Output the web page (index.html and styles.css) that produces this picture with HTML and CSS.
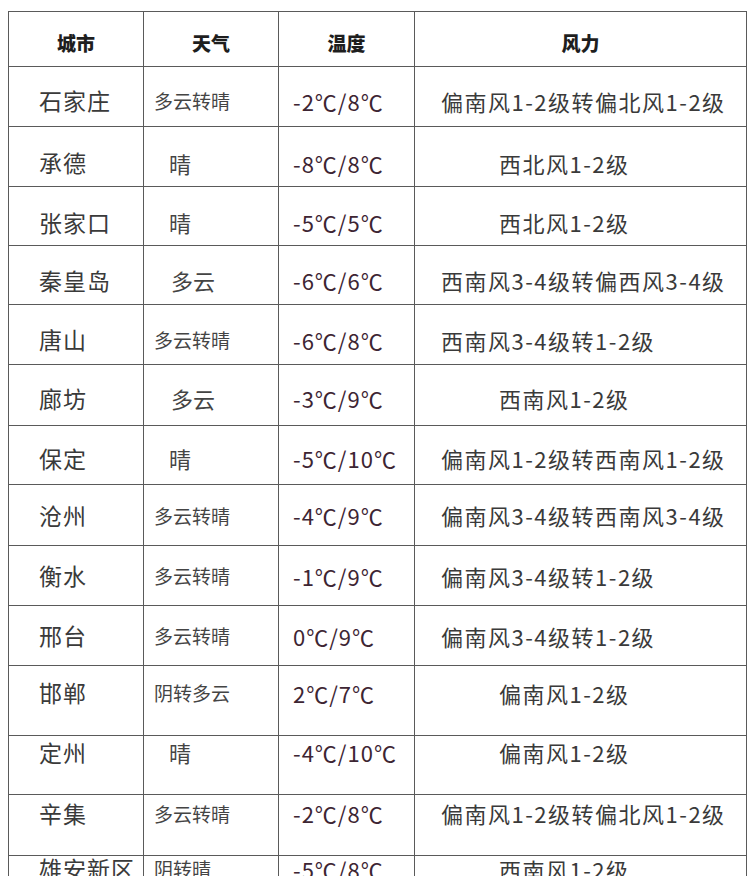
FILE: index.html
```html
<!DOCTYPE html>
<html lang="zh-CN">
<head>
<meta charset="utf-8">
<title>河北天气</title>
<link rel="stylesheet" href="styles.css">
</head>
<body>
<div class="table">
  <div class="row head pt6">
    <div class="cell hc">城市</div>
    <div class="cell hc">天气</div>
    <div class="cell hc">温度</div>
    <div class="cell hc">风力</div>
  </div>
  <div class="row pt8">
    <div class="cell city">石家庄</div>
    <div class="cell wx">多云转晴</div>
    <div class="cell temp">-2℃/8℃</div>
    <div class="cell wind">偏南风1-2级转偏北风1-2级</div>
  </div>
  <div class="row pt12">
    <div class="cell city">承德</div>
    <div class="cell wx wx1">晴</div>
    <div class="cell temp">-8℃/8℃</div>
    <div class="cell wind short">西北风1-2级</div>
  </div>
  <div class="row h59 pt12">
    <div class="cell city">张家口</div>
    <div class="cell wx wx1">晴</div>
    <div class="cell temp">-5℃/5℃</div>
    <div class="cell wind short">西北风1-2级</div>
  </div>
  <div class="row h59 pt10">
    <div class="cell city">秦皇岛</div>
    <div class="cell wx wx2">多云</div>
    <div class="cell temp">-6℃/6℃</div>
    <div class="cell wind">西南风3-4级转偏西风3-4级</div>
  </div>
  <div class="row pt10">
    <div class="cell city">唐山</div>
    <div class="cell wx">多云转晴</div>
    <div class="cell temp">-6℃/8℃</div>
    <div class="cell wind">西南风3-4级转1-2级</div>
  </div>
  <div class="row h61 pt6">
    <div class="cell city">廊坊</div>
    <div class="cell wx wx2">多云</div>
    <div class="cell temp">-3℃/9℃</div>
    <div class="cell wind short">西南风1-2级</div>
  </div>
  <div class="row h59 pt6">
    <div class="cell city">保定</div>
    <div class="cell wx wx1">晴</div>
    <div class="cell temp">-5℃/10℃</div>
    <div class="cell wind">偏南风1-2级转西南风1-2级</div>
  </div>
  <div class="row h61">
    <div class="cell city">沧州</div>
    <div class="cell wx">多云转晴</div>
    <div class="cell temp">-4℃/9℃</div>
    <div class="cell wind">偏南风3-4级转西南风3-4级</div>
  </div>
  <div class="row">
    <div class="cell city">衡水</div>
    <div class="cell wx">多云转晴</div>
    <div class="cell temp">-1℃/9℃</div>
    <div class="cell wind">偏南风3-4级转1-2级</div>
  </div>
  <div class="row">
    <div class="cell city">邢台</div>
    <div class="cell wx">多云转晴</div>
    <div class="cell temp">0℃/9℃</div>
    <div class="cell wind">偏南风3-4级转1-2级</div>
  </div>
  <div class="row h70 pb16">
    <div class="cell city">邯郸</div>
    <div class="cell wx">阴转多云</div>
    <div class="cell temp">2℃/7℃</div>
    <div class="cell wind short">偏南风1-2级</div>
  </div>
  <div class="row h59 pb26">
    <div class="cell city">定州</div>
    <div class="cell wx wx1">晴</div>
    <div class="cell temp">-4℃/10℃</div>
    <div class="cell wind short">偏南风1-2级</div>
  </div>
  <div class="row h61 pb24">
    <div class="cell city">辛集</div>
    <div class="cell wx">多云转晴</div>
    <div class="cell temp">-2℃/8℃</div>
    <div class="cell wind">偏南风1-2级转偏北风1-2级</div>
  </div>
  <div class="row pb34">
    <div class="cell city">雄安新区</div>
    <div class="cell wx">阴转晴</div>
    <div class="cell temp">-5℃/8℃</div>
    <div class="cell wind short">西南风1-2级</div>
  </div>
</div>
</body>
</html>
```

FILE: styles.css
```css
html, body {
  margin: 0;
  padding: 0;
  background: #ffffff;
}

body {
  font-family: "Noto Sans CJK SC", "Noto Sans", sans-serif;
  color: #333333;
  overflow: hidden;
}

.table {
  margin: 11px 0 0 8px;
  width: 739px;
  box-sizing: border-box;
  border: 1px solid #5a5a5a;
  border-bottom: none;
}

.row {
  display: grid;
  grid-template-columns: 134px 135px 136px 332px;
  height: 60px;
  box-sizing: border-box;
  border-bottom: 1px solid #5a5a5a;
  align-items: center;
}

.row.head { height: 55px; }
.row.h59 { height: 59px; }
.row.h61 { height: 61px; }
.row.h70 { height: 70px; }

.pt6 { padding-top: 6px; }
.pt8 { padding-top: 8px; }
.pt10 { padding-top: 10px; }
.pt12 { padding-top: 12px; }
.pb16 { padding-bottom: 16px; }
.pb24 { padding-bottom: 24px; }
.pb26 { padding-bottom: 26px; }
.pb34 { padding-bottom: 34px; }

.cell {
  box-sizing: border-box;
  height: 100%;
  display: flex;
  align-items: center;
  white-space: nowrap;
  line-height: 1;
  border-left: 1px solid #5a5a5a;
}

.row > .cell:first-child { border-left: none; }

/* The row padding shifts the text; the vertical cell lines still span the full row */
.row.pt6 > .cell { margin-top: -6px; height: calc(100% + 6px); padding-top: 6px; }
.row.pt8 > .cell { margin-top: -8px; height: calc(100% + 8px); padding-top: 8px; }
.row.pt10 > .cell { margin-top: -10px; height: calc(100% + 10px); padding-top: 10px; }
.row.pt12 > .cell { margin-top: -12px; height: calc(100% + 12px); padding-top: 12px; }
.row.pb16 > .cell { margin-bottom: -16px; height: calc(100% + 16px); padding-bottom: 16px; }
.row.pb24 > .cell { margin-bottom: -24px; height: calc(100% + 24px); padding-bottom: 24px; }
.row.pb26 > .cell { margin-bottom: -26px; height: calc(100% + 26px); padding-bottom: 26px; }
.row.pb34 > .cell { margin-bottom: -34px; height: calc(100% + 34px); padding-bottom: 34px; }

.hc {
  justify-content: center;
  font-weight: 900;
  font-size: 19px;
  color: #1e1e1e;
}

.city {
  font-size: 23px;
  letter-spacing: 1px;
  padding-left: 30px;
  color: #3a3a3a;
}

.wx {
  font-size: 19px;
  padding-left: 10px;
  color: #444444;
}

.wx.wx1 { font-size: 22px; padding-left: 25px; }
.wx.wx2 { font-size: 22px; padding-left: 27px; }

.temp {
  font-size: 22px;
  letter-spacing: 1px;
  padding-left: 14px;
  color: #3d2533;
}

.wind {
  font-size: 22px;
  letter-spacing: 1.5px;
  padding-left: 26px;
  color: #3a3a3a;
}

.wind.short { padding-left: 84px; }
```
